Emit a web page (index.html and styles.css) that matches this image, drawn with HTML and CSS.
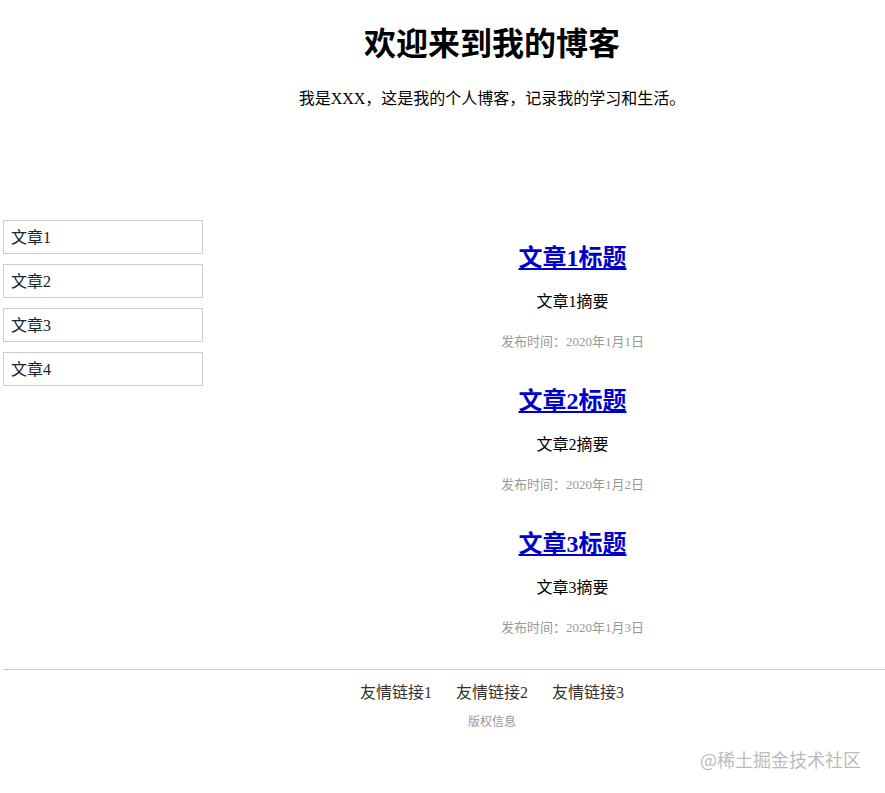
FILE: index.html
```html
<!DOCTYPE html>
<html lang="zh-CN">
<head>
    <meta charset="UTF-8">
    <meta name="viewport" content="width=device-width, initial-scale=1.0">
    <title>我的博客</title>
    <link rel="stylesheet" href="styles.css">
</head>
<body>

<div class="header">
    <h1>欢迎来到我的博客</h1>
    <p>我是XXX，这是我的个人博客，记录我的学习和生活。</p>
</div>

<div class="main">
    <div class="sidebar">
        <div class="side-item">文章1</div>
        <div class="side-item">文章2</div>
        <div class="side-item">文章3</div>
        <div class="side-item">文章4</div>
    </div>

    <div class="articles">
        <div class="article">
            <h2><a href="#">文章1标题</a></h2>
            <p class="summary">文章1摘要</p>
            <p class="date">发布时间：2020年1月1日</p>
        </div>
        <div class="article">
            <h2><a href="#">文章2标题</a></h2>
            <p class="summary">文章2摘要</p>
            <p class="date">发布时间：2020年1月2日</p>
        </div>
        <div class="article">
            <h2><a href="#">文章3标题</a></h2>
            <p class="summary">文章3摘要</p>
            <p class="date">发布时间：2020年1月3日</p>
        </div>
    </div>
</div>

<div class="footer">
    <div class="links">
        <span>友情链接1</span>
        <span>友情链接2</span>
        <span>友情链接3</span>
    </div>
    <p class="copyright">版权信息</p>
</div>

<div class="watermark">@稀土掘金技术社区</div>

</body>
</html>
```

FILE: styles.css
```css
body {
    font-family: "Liberation Serif", "Noto Sans CJK SC", serif;
    margin: 0;
    padding: 0 0 0 3px;
    color: #000;
}
.header {
    text-align: center;
    padding-left: 96px;
    padding-top: 25px;
}
.header h1 {
    font-size: 32px;
    line-height: 38px;
    margin: 0;
}
.header p {
    font-size: 16px;
    line-height: 20px;
    margin: 26px 0 0;
}
.main {
    display: flex;
    margin-top: 111px;
}
.sidebar {
    width: 200px;
    display: flex;
    flex-direction: column;
    gap: 10px;
}
.side-item {
    border: 1px solid #ccc;
    padding: 8px 7px 6px;
    font-size: 16px;
    line-height: 18px;
    color: #222;
}
.articles {
    flex-grow: 1;
    padding-left: 57px;
    padding-top: 24px;
    display: flex;
    flex-direction: column;
    gap: 37px;
    text-align: center;
}
.article h2 {
    font-size: 24px;
    line-height: 28px;
    margin: 0;
}
.article h2 a {
    color: #0000cc;
}
.summary {
    font-size: 16px;
    line-height: 20px;
    margin: 20px 0 0;
}
.date {
    font-size: 13px;
    line-height: 16px;
    color: #999;
    margin: 22px 0 0;
}
.footer {
    margin-top: 33px;
    border-top: 1px solid #ccc;
    text-align: center;
    padding-left: 96px;
}
.links {
    display: flex;
    justify-content: center;
    gap: 24px;
    margin-top: 13px;
    font-size: 16px;
    line-height: 20px;
    color: #333;
}
.copyright {
    font-size: 12px;
    line-height: 16px;
    color: #999;
    margin: 11px 0 0;
}
.watermark {
    position: absolute;
    left: 700px;
    top: 747px;
    font-family: "Noto Sans CJK SC", sans-serif;
    font-size: 18px;
    line-height: 24px;
    color: #bbb;
}
```
